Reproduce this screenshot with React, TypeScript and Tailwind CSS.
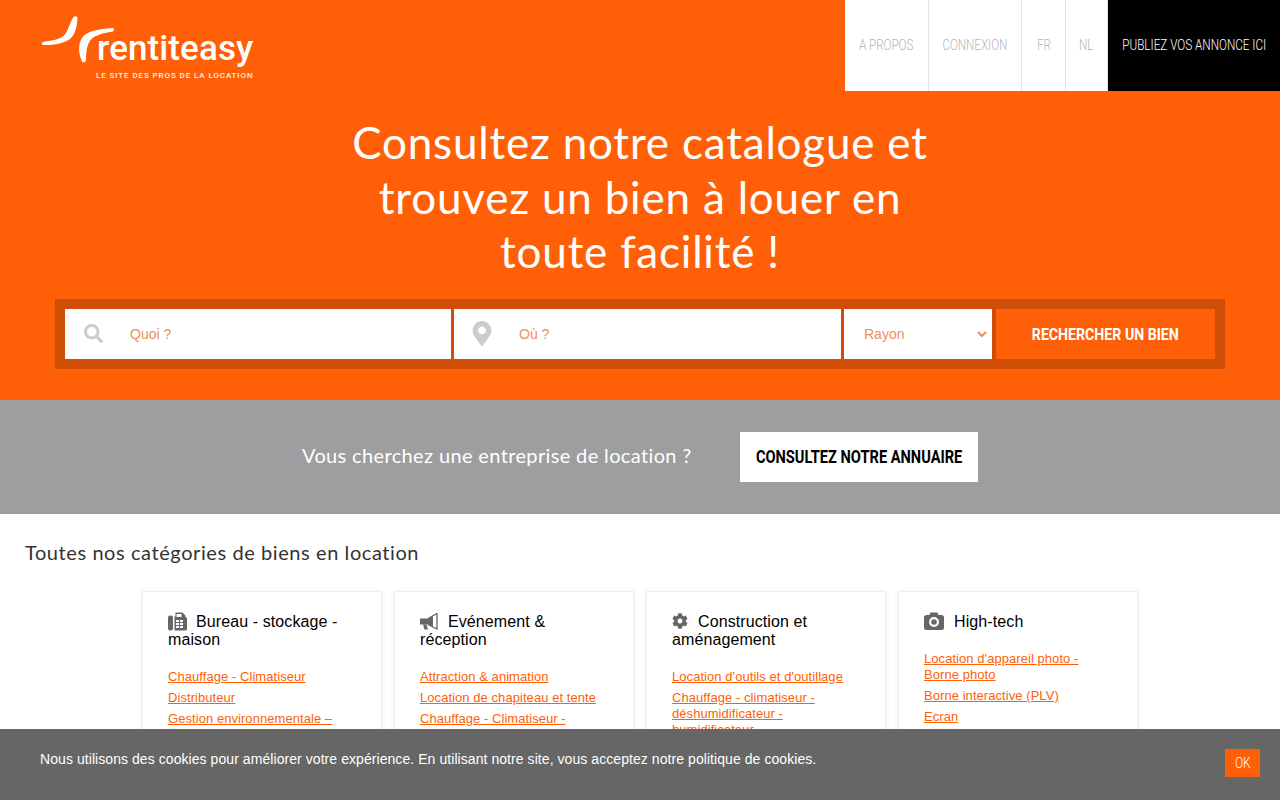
import React from "react";
import { FaCog, FaMapMarkerAlt, FaSearch } from "react-icons/fa";

const din = "font-['Roboto',sans-serif]";
const raleway = "font-['Lato',sans-serif]";
const helvetica = "font-['Liberation_Sans',Arial,sans-serif]";

const navItems = [
  { label: "A PROPOS", width: "w-[84px]" },
  { label: "CONNEXION", width: "w-[93px]" },
  { label: "FR", width: "w-[44px]" },
  { label: "NL", width: "w-[42px]" },
];

const FaxIcon = () => (
  <svg viewBox="0 0 19 19" className="inline-block w-[19px] h-[19px] mr-[9px] -mt-[3px] text-[#666]" fill="currentColor">
    <rect x="0" y="3.5" width="5" height="15" rx="2" />
    <path d="M6.5 18.5V4.5h1V0.5h7l3 3v1.5a1.5 1.5 0 0 1 1.5 1.5v10.5a1.5 1.5 0 0 1-1.5 1.5z" />
    <path d="M8.5 2h5v3h-5z" fill="#fff" />
    <path d="M8 8h3v2H8zM12 8h3v2h-3zM8 11h3v2H8zM12 11h3v2h-3zM8 14h3v2H8zM12 14h3v2h-3z" fill="#fff" />
  </svg>
);

const BullhornIcon = () => (
  <svg viewBox="0 0 19 17" className="inline-block w-[19px] h-[17px] mr-[9px] -mt-[3px] text-[#666]" fill="currentColor">
    <path d="M0 5.5h8L13 3v11L8 11.5H0z" />
    <path d="M3 11.5h3.5l1.5 5H4.5z" />
    <path d="M8 5.5L17 0.5V16L8 11.5" fill="none" stroke="currentColor" strokeWidth="1.3" />
  </svg>
);

const CameraIcon = () => (
  <svg viewBox="0 0 20 18" className="inline-block w-[20px] h-[18px] mr-[10px] -mt-[3px] text-[#666]" fill="currentColor">
    <path d="M2.5 3H5.5L6.5 0.5H13.5L14.5 3h3A2.5 2.5 0 0 1 20 5.5v10a2.5 2.5 0 0 1-2.5 2.5h-15A2.5 2.5 0 0 1 0 15.5v-10A2.5 2.5 0 0 1 2.5 3z" />
    <circle cx="10" cy="10" r="5" fill="#fff" />
    <circle cx="10" cy="10" r="2.8" />
  </svg>
);

const categories = [
  {
    icon: <FaxIcon />,
    title: "Bureau - stockage - maison",
    links: ["Chauffage - Climatiseur", "Distributeur", "Gestion environnementale –"],
  },
  {
    icon: <BullhornIcon />,
    title: "Evénement & réception",
    links: ["Attraction & animation", "Location de chapiteau et tente", "Chauffage - Climatiseur -"],
  },
  {
    icon: <FaCog className="inline-block w-[16px] h-[16px] mr-[10px] -mt-[3px] text-[#666]" />,
    title: "Construction et aménagement",
    links: ["Location d'outils et d'outillage", "Chauffage - climatiseur - déshumidificateur - humidificateur"],
  },
  {
    icon: <CameraIcon />,
    title: "High-tech",
    links: ["Location d'appareil photo - Borne photo", "Borne interactive (PLV)", "Ecran"],
  },
];

const Logo = () => (
  <div className="flex flex-col ml-[41px] mt-[15px] w-[214px] text-white">
    <div className="flex items-end h-[50px]">
      <svg width="74" height="50" viewBox="0 0 74 50" fill="currentColor" className="shrink-0">
        <path d="M32.5 2C34.5 .5 36.5 1 36.5 3.5 36 10 35 18 30 23 24 29 10 30.5 2 30 .5 30 .5 27.5 2 27 9 25.5 18 25 23 20.5 27 16.5 29 7 32.5 2Z" />
        <path d="M71.5 13C73.5 13 73.5 16 71.5 16.5 64 18 56 19.5 51 23.5 45.5 28.5 45 38 45 45 44.5 48 41 48 40.5 45.5 37 36 37 27 43 20.5 50 14.5 62 14 71.5 13Z" />
      </svg>
      <span className="font-['Roboto',sans-serif] font-medium text-[35px] leading-[36px] -ml-[18px] -mb-[2px] tracking-[0.1px] whitespace-nowrap">
        rentiteasy
      </span>
    </div>
    <span className="font-['Roboto',sans-serif] font-medium text-[8px] leading-[10px] tracking-[0.9px] mt-[6px] ml-[55px] whitespace-nowrap opacity-90">
      LE SITE DES PROS DE LA LOCATION
    </span>
  </div>
);

const Nav = () => (
  <nav className={`flex h-[91px] ${din} font-light text-[15px]`}>
    {navItems.map((item) => (
      <a
        key={item.label}
        className={`${item.width} bg-white text-[#b4b4b4] border-r border-[#e2e2e2] last:border-r-0 flex items-center justify-center`}
      >
        <span className="inline-block scale-x-[0.775] whitespace-nowrap">{item.label}</span>
      </a>
    ))}
    <a className="w-[172px] bg-black text-white flex items-center justify-center">
      <span className="inline-block scale-x-[0.78] whitespace-nowrap">PUBLIEZ VOS ANNONCE ICI</span>
    </a>
  </nav>
);

const SearchBar = () => (
  <div className="mx-[55px] mt-[20px] h-[70px] bg-[#cf4f08] p-[10px] flex gap-[3px]">
    <div className="w-[386px] h-[50px] bg-white flex items-center">
      <FaSearch className="w-[19px] h-[19px] ml-[19px] mr-[27px] text-[#cccccc]" />
      <input
        placeholder="Quoi ?"
        className={`flex-1 min-w-0 outline-none pt-[2px] text-[14px] ${helvetica} placeholder:text-[#ee8f5e]`}
      />
    </div>
    <div className="w-[387px] h-[50px] bg-white flex items-center">
      <FaMapMarkerAlt className="w-[20px] h-[25px] ml-[18px] mr-[27px] text-[#cccccc]" />
      <input
        placeholder="Où ?"
        className={`flex-1 min-w-0 outline-none pt-[2px] text-[14px] ${helvetica} placeholder:text-[#ee8f5e]`}
      />
    </div>
    <div className="w-[148px] h-[50px] bg-white flex items-center justify-between pt-[1px] pl-[20px] pr-[5px]">
      <span className={`text-[14px] text-[#ee8f5e] ${helvetica}`}>Rayon</span>
      <svg width="10" height="7" viewBox="0 0 10 7" fill="none" stroke="#ee8f5e" strokeWidth="2">
        <path d="M1 1l4 4 4-4" />
      </svg>
    </div>
    <button className={`ml-[1px] w-[219px] h-[50px] pt-[2px] bg-[#ff5f07] text-white font-bold text-[17px] ${din}`}>
      <span className="inline-block scale-x-[0.832] whitespace-nowrap">RECHERCHER UN BIEN</span>
    </button>
  </div>
);

const Hero = () => (
  <section className="bg-[#ff5f07] h-[400px]">
    <div className="flex justify-between items-start h-[91px]">
      <Logo />
      <Nav />
    </div>
    <h1 className={`${raleway} mt-[24px] text-white text-center text-[44px] leading-[54.5px] tracking-[0.8px]`}>
      Consultez notre catalogue et
      <br />
      trouvez un bien à louer en
      <br />
      toute facilité !
    </h1>
    <SearchBar />
  </section>
);

const Annuaire = () => (
  <section className="bg-[#9d9ea0] h-[114px] flex items-center pl-[302px] gap-[48px]">
    <p className={`${raleway} text-white text-[20px] tracking-[0.36px] w-[390px] whitespace-nowrap -mt-[4px]`}>
      Vous cherchez une entreprise de location ?
    </p>
    <a className={`w-[238px] h-[50px] pb-[1px] bg-white text-black font-bold text-[18px] flex items-center justify-center ${din}`}>
      <span className="inline-block scale-x-[0.812] whitespace-nowrap">CONSULTEZ NOTRE ANNUAIRE</span>
    </a>
  </section>
);

const CategoryCard = ({ icon, title, links }: { icon: React.ReactNode; title: string; links: string[] }) => (
  <div className="w-[240px] border border-[#eeeeee] shadow-[0_2px_6px_rgba(0,0,0,0.08)] bg-white px-[25px] pt-[21px] pb-[20px]">
    <h3 className={`${helvetica} text-[16px] leading-[18px] tracking-[0.1px] text-black mb-[20px]`}>
      {icon}
      {title}
    </h3>
    <ul className={`${helvetica} text-[13px] leading-[16px] tracking-[0.06px] text-[#ff5f07]`}>
      {links.map((link) => (
        <li key={link} className="mb-[5px]">
          <a className="underline">{link}</a>
        </li>
      ))}
    </ul>
  </div>
);

const Categories = () => (
  <section className="bg-white h-[215px] overflow-hidden">
    <h2 className={`${raleway} text-[20px] leading-[24px] tracking-[0.58px] text-[#333] pt-[26px] pl-[25px] box-content`}>
      Toutes nos catégories de biens en location
    </h2>
    <div className="flex gap-[12px] pl-[142px] mt-[27px]">
      {categories.map((c) => (
        <CategoryCard key={c.title} icon={c.icon} title={c.title} links={c.links} />
      ))}
    </div>
  </section>
);

const CookieBar = () => (
  <div className="h-[71px] bg-[#666666] flex items-start justify-between pl-[40px] pr-[20px] pt-[20px]">
    <p className={`${helvetica} text-white text-[14px] leading-[20px] tracking-[0.065px]`}>
      Nous utilisons des cookies pour améliorer votre expérience. En utilisant notre site, vous acceptez notre politique de cookies.
    </p>
    <button className={`w-[35px] h-[28px] bg-[#ff5f07] text-white font-light text-[15px] ${din}`}>
      <span className="inline-block scale-x-[0.8]">OK</span>
    </button>
  </div>
);

export default function App() {
  return (
    <div className="h-screen overflow-hidden">
      <Hero />
      <Annuaire />
      <Categories />
      <CookieBar />
    </div>
  );
}
